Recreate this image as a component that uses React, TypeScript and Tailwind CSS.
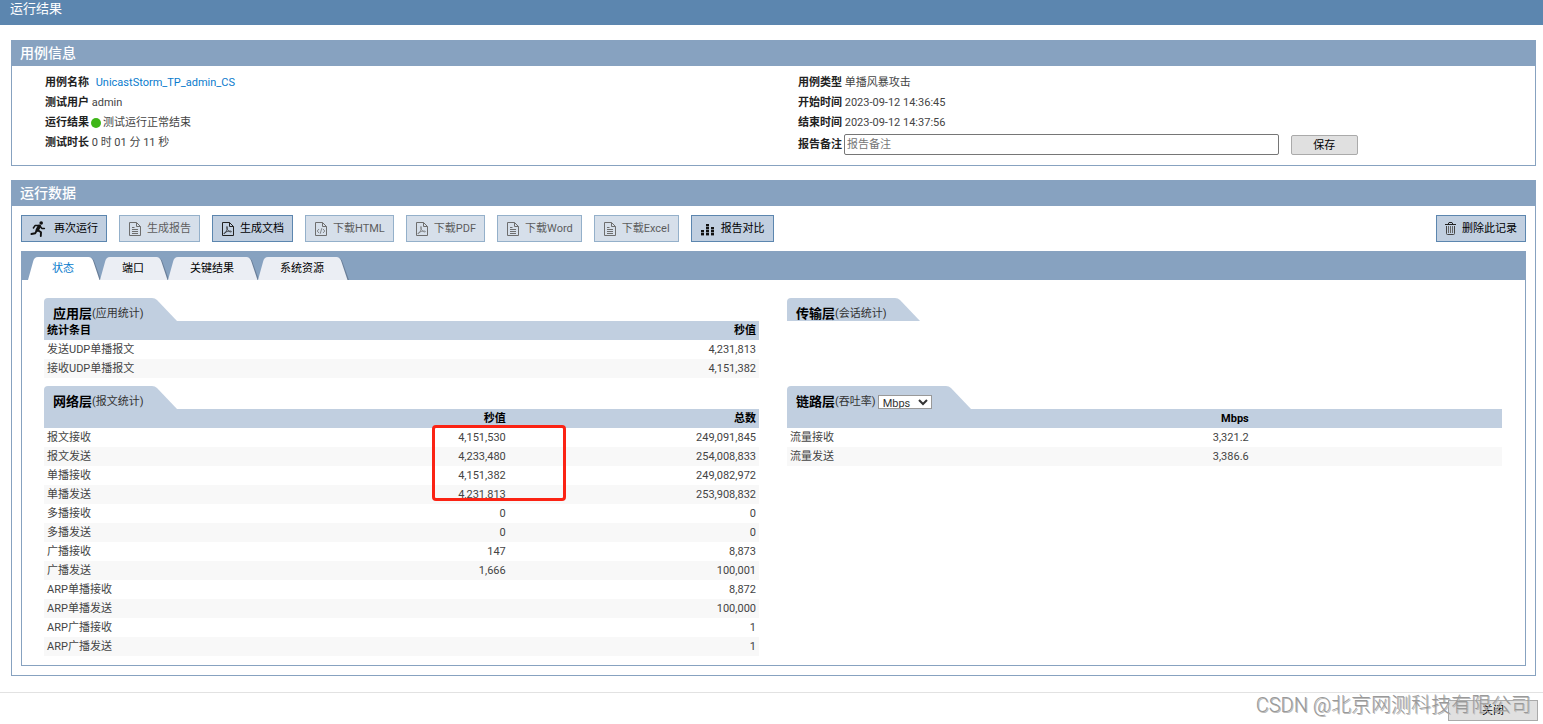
import { useState } from "react";
import type { ReactNode } from "react";

const layers = {
  app: {
    head: ["统计条目", "", "秒值"],
    rows: [
      ["发送UDP单播报文", "", "4,231,813"],
      ["接收UDP单播报文", "", "4,151,382"],
    ],
  },
  network: {
    head: ["", "秒值", "总数"],
    rows: [
      ["报文接收", "4,151,530", "249,091,845"],
      ["报文发送", "4,233,480", "254,008,833"],
      ["单播接收", "4,151,382", "249,082,972"],
      ["单播发送", "4,231,813", "253,908,832"],
      ["多播接收", "0", "0"],
      ["多播发送", "0", "0"],
      ["广播接收", "147", "8,873"],
      ["广播发送", "1,666", "100,001"],
      ["ARP单播接收", "", "8,872"],
      ["ARP单播发送", "", "100,000"],
      ["ARP广播接收", "", "1"],
      ["ARP广播发送", "", "1"],
    ],
  },
  link: {
    head: ["", "Mbps", ""],
    rows: [
      ["流量接收", "3,321.2", ""],
      ["流量发送", "3,386.6", ""],
    ],
  },
};

function RunIcon() {
  return (
    <svg width="18" height="16" viewBox="0 0 18 16" fill="none" stroke="#111" strokeLinecap="round" strokeLinejoin="round">
      <circle cx="11.2" cy="2" r="1.8" fill="#111" stroke="none" />
      <path d="M9.4 5.2L7.2 9" strokeWidth="3.4" />
      <path d="M9 4.4L5.2 4.4L3.4 7" strokeWidth="1.5" />
      <path d="M10.2 5.2L11.8 7.4L14.4 7.4" strokeWidth="1.5" />
      <path d="M8 9.4L11 11.2L10.8 15" strokeWidth="1.9" />
      <path d="M6.8 9.6L5.2 12.2L1.4 13" strokeWidth="1.9" />
    </svg>
  );
}

function FileIcon({ kind }: { kind: "text" | "pdf" | "code" }) {
  return (
    <svg width="13" height="14" viewBox="0 0 13 14" fill="none" stroke="#222" strokeWidth="1">
      <path d="M1.5 0.5H8.5L12.5 4.5V13.5H1.5Z" />
      <path d="M8.5 0.5V4.5H12.5" />
      {kind === "text" && <path d="M4 5.5H6.5M4 7.5H10M4 9.5H10M4 11.5H10" />}
      {kind === "pdf" && (
        <path strokeWidth="0.7" d="M3.2 11.8C4.6 11.4 6.5 7.6 6.4 5.2C6.3 4 5.3 4.2 5.6 5.6C6 7.8 7.8 9.8 9.8 10C10.8 10 10.6 9 9.4 9C7.4 9 4.6 9.8 3.4 10.8C2.7 11.5 2.8 12 3.2 11.8Z" />
      )}
      {kind === "code" && <path strokeWidth="0.8" d="M5 7L3.2 9L5 11M9 7L10.8 9L9 11M7.8 6.2L6.2 11.8" />}
    </svg>
  );
}

function CompareIcon() {
  return (
    <svg width="15" height="14" viewBox="0 0 15 14" fill="#111">
      {[2, 4, 3].map((n, c) =>
        Array.from({ length: n }, (_, r) => (
          <rect key={`${c}-${r}`} x={c * 5 + 1} y={11 - r * 3} width="3" height="2.4" />
        ))
      )}
    </svg>
  );
}

function TrashIcon() {
  return (
    <svg width="11" height="13" viewBox="0 0 11 13" fill="none" stroke="#222">
      <path d="M0 2.5H11M3 2.5L4 0.5H7L8 2.5" />
      <path d="M1.5 4V11.5Q1.5 12.5 2.5 12.5H8.5Q9.5 12.5 9.5 11.5V4" stroke="#444" />
      <path d="M3.5 4V11M5.5 4V11M7.5 4V11" stroke="#666" />
    </svg>
  );
}

function ToolButton({ icon, disabled, children }: { icon: ReactNode; disabled?: boolean; children: ReactNode }) {
  return (
    <button
      type="button"
      disabled={disabled}
      className="flex h-[27px] items-center gap-1.5 border border-[#5c86af] bg-[#c1cfe0] px-2 text-black disabled:opacity-65"
    >
      {icon}
      <span>{children}</span>
    </button>
  );
}

function Tab({ label, active, onClick }: { label: string; active: boolean; onClick: () => void }) {
  const fill = active ? "#ffffff" : "#ebeef4";
  return (
    <button type="button" role="tab" aria-selected={active} onClick={onClick} className="flex h-[23px]">
      <svg width="10" height="23" viewBox="0 0 10 23">
        <path d="M0 23L5 5Q6 0 10 0V23Z" fill={fill} />
      </svg>
      <span className={active ? "bg-white px-3.5 leading-6 text-[#0a7ccd]" : "bg-[#ebeef4] px-3 leading-6 text-black"}>
        {label}
      </span>
      <svg width="12" height="23" viewBox="0 0 12 23" className="overflow-visible">
        <path d="M0 0.5H2Q5 1 6.5 5L13 23H0Z" fill="#6a7f99" />
        <path d="M0 0H0.5Q4 0 5.5 5L11.5 23H0Z" fill={fill} />
      </svg>
    </button>
  );
}

function Layer({ name, note, extra, children }: { name: string; note: string; extra?: ReactNode; children?: ReactNode }) {
  return (
    <section className="relative">
      <div className="flex h-[23px]">
        <h3 className="flex items-center rounded-tl bg-[#c1cfe0] pt-2 pr-2 pl-[9px] text-[13px] leading-4 font-bold text-black">
          {name}
          <span className="text-[11px] font-normal text-[#333]">({note})</span>
          {extra}
        </h3>
        <svg width="25" height="23" viewBox="0 0 25 23">
          <path d="M0 0Q3 0 5 2L25 23H0Z" fill="#c1cfe0" />
        </svg>
      </div>
      {children}
    </section>
  );
}

function StatTable({ head, rows }: { head: string[]; rows: string[][] }) {
  return (
    <table className="w-full table-fixed border-collapse">
      <thead>
        <tr className="h-[19px] bg-[#c1cfe0] text-black">
          <th className="w-[30%] px-[3px] py-0 text-left">{head[0]}</th>
          <th className="w-[35%] px-[3px] py-0 text-right">{head[1]}</th>
          <th className="w-[35%] px-[3px] py-0 text-right">{head[2]}</th>
        </tr>
      </thead>
      <tbody>
        {rows.map((r) => (
          <tr key={r[0]} className="h-[19px] even:bg-[#f8f8f8]">
            <td className="px-[3px] py-0">{r[0]}</td>
            <td className="px-[3px] py-0 text-right">{r[1]}</td>
            <td className="px-[3px] py-0 text-right">{r[2]}</td>
          </tr>
        ))}
      </tbody>
    </table>
  );
}

function Panel({ title, children }: { title: string; children: ReactNode }) {
  return (
    <section className="mr-[7px] ml-[11px] border border-[#87a2c0]">
      <h2 className="h-[25px] bg-[#87a2c0] px-2 text-sm leading-6 font-medium text-white">{title}</h2>
      {children}
    </section>
  );
}

export default function App() {
  const [tab, setTab] = useState("状态");
  const [remark, setRemark] = useState("");

  return (
    <div className="bg-white font-[Roboto,'Noto_Sans_CJK_SC',sans-serif] text-[11px] leading-4 text-[#444]">
      <h1 className="h-[25px] bg-[#5c86af] px-2.5 text-[13px] leading-[18px] text-white">运行结果</h1>

      <div className="mt-[15px] flex flex-col gap-3.5">
        <Panel title="用例信息">
          <div className="grid grid-cols-2 pt-[7px] pb-2.5 pl-[33px] leading-5">
            <div>
              <p>
                <b className="text-[#222]">用例名称</b> <a href="#case" className="ml-1 text-[#0a7ccd]">UnicastStorm_TP_admin_CS</a>
              </p>
              <p><b className="text-[#222]">测试用户</b> admin</p>
              <p className="flex items-center gap-0.5">
                <b className="text-[#222]">运行结果</b>
                <span className="size-2.5 rounded-full bg-[#3fb618]" />
                <span>测试运行正常结束</span>
              </p>
              <p><b className="text-[#222]">测试时长</b> 0 时 01 分 11 秒</p>
            </div>
            <div className="pl-2">
              <p><b className="text-[#222]">用例类型</b> 单播风暴攻击</p>
              <p><b className="text-[#222]">开始时间</b> 2023-09-12 14:36:45</p>
              <p><b className="text-[#222]">结束时间</b> 2023-09-12 14:37:56</p>
              <div className="mt-px flex items-center">
                <label htmlFor="remark" className="mr-0.5 font-bold text-[#222]">报告备注</label>
                <input
                  id="remark"
                  value={remark}
                  onChange={(e) => setRemark(e.target.value)}
                  placeholder="报告备注"
                  className="h-[21px] w-[59%] rounded-xs border border-[#767676] px-0.5 placeholder:text-[#757575]"
                />
                <button type="button" className="ml-3 h-5 w-[67px] rounded-xs border border-[#aaa] bg-[#e0e0e0] leading-5 text-black">
                  保存
                </button>
              </div>
            </div>
          </div>
        </Panel>

        <Panel title="运行数据">
          <div className="p-[9px]">
            <div className="flex items-center gap-3">
              <ToolButton icon={<RunIcon />}>再次运行</ToolButton>
              <ToolButton icon={<FileIcon kind="text" />} disabled>生成报告</ToolButton>
              <ToolButton icon={<FileIcon kind="pdf" />}>生成文档</ToolButton>
              <ToolButton icon={<FileIcon kind="code" />} disabled>下载HTML</ToolButton>
              <ToolButton icon={<FileIcon kind="pdf" />} disabled>下载PDF</ToolButton>
              <ToolButton icon={<FileIcon kind="text" />} disabled>下载Word</ToolButton>
              <ToolButton icon={<FileIcon kind="text" />} disabled>下载Excel</ToolButton>
              <ToolButton icon={<CompareIcon />}>报告对比</ToolButton>
              <div className="ml-auto">
                <ToolButton icon={<TrashIcon />}>删除此记录</ToolButton>
              </div>
            </div>

            <div className="mt-[9px] border border-[#87a2c0]">
              <div role="tablist" className="flex h-7 items-end bg-[#87a2c0] pl-1.5">
                {["状态", "端口", "关键结果", "系统资源"].map((t) => (
                  <Tab key={t} label={t} active={tab === t} onClick={() => setTab(t)} />
                ))}
              </div>
              <div className="grid grid-cols-2 gap-x-7 gap-y-2 pt-[18px] pr-[23px] pb-[9px] pl-[22px]">
                <Layer name="应用层" note="应用统计">
                  <StatTable {...layers.app} />
                </Layer>
                <Layer name="传输层" note="会话统计" />
                <Layer name="网络层" note="报文统计">
                  <StatTable {...layers.network} />
                  <div className="absolute top-[39px] left-[388px] h-[76px] w-[134px] rounded-sm border-3 border-[#fb2314]" />
                </Layer>
                <Layer
                  name="链路层"
                  note="吞吐率"
                  extra={
                    <select
                      aria-label="吞吐率"
                      className="mr-1.5 ml-0.5 h-3.5 w-[54px] border border-[#999] bg-white text-[11px] leading-3 font-normal text-[#333]"
                    >
                      <option>Mbps</option>
                      <option>Gbps</option>
                    </select>
                  }
                >
                  <StatTable {...layers.link} />
                </Layer>
              </div>
            </div>
          </div>
        </Panel>
      </div>

      <footer className="relative mt-4 flex justify-end border-t border-[#e2e2e2] pt-[7px] pr-[5px] pb-[3px]">
        <button type="button" className="h-[21px] w-[90px] border border-[#aaa] bg-[#e0e0e0] leading-5 text-black">关闭</button>
        <span className="pointer-events-none absolute top-0 right-3 text-xl leading-6 font-light text-[#999] text-shadow-[1px_1px_0_#bbb]">
          CSDN @北京网测科技有限公司
        </span>
      </footer>
    </div>
  );
}
